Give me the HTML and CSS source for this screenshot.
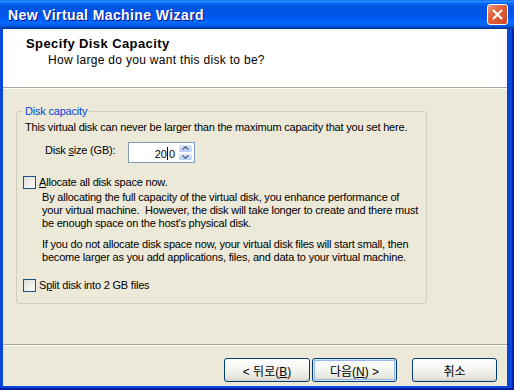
FILE: index.html
```html
<!DOCTYPE html>
<html lang="ko">
<head>
    <meta charset="UTF-8">
    <meta name="viewport" content="width=device-width, initial-scale=1.0">
    <title>New Virtual Machine Wizard</title>
    <link rel="stylesheet" href="styles.css">
</head>
<body>
    <div class="window">
        <div class="titlebar">
            <span class="title">New Virtual Machine Wizard</span>
            <button class="close" aria-label="Close">
                <svg width="13" height="13" viewBox="0 0 13 13"><path d="M2 2 L11 11 M11 2 L2 11" stroke="#fff" stroke-width="2.2" fill="none"/></svg>
            </button>
        </div>

        <div class="frame">
            <div class="client">
                <!-- Page header -->
                <div class="header">
                    <h1>Specify Disk Capacity</h1>
                    <p>How large do you want this disk to be?</p>
                </div>

                <div class="content">
                    <fieldset class="group">
                        <legend>Disk capacity</legend>
                        <p class="intro">This virtual disk can never be larger than the maximum capacity that you set here.</p>

                        <div class="size-row">
                            <label>Disk <u>s</u>ize (GB):</label>
                            <div class="spinner">
                                <div class="spin-value">20<span class="caret"></span>0</div>
                                <div class="spin-buttons">
                                    <span class="spin-btn">
                                        <svg width="7" height="4" viewBox="0 0 7 4"><path d="M0.5 3.5 L3.5 0.8 L6.5 3.5" stroke="#4d6185" stroke-width="1.4" fill="none"/></svg>
                                    </span>
                                    <span class="spin-btn">
                                        <svg width="7" height="4" viewBox="0 0 7 4"><path d="M0.5 0.5 L3.5 3.2 L6.5 0.5" stroke="#4d6185" stroke-width="1.4" fill="none"/></svg>
                                    </span>
                                </div>
                            </div>
                        </div>

                        <div class="check"><span class="box"></span><span><u>A</u>llocate all disk space now.</span></div>
                        <p class="note">By allocating the full capacity of the virtual disk, you enhance performance of<br>your virtual machine.&nbsp; However, the disk will take longer to create and there must<br>be enough space on the host's physical disk.</p>
                        <p class="note second">If you do not allocate disk space now, your virtual disk files will start small, then<br>become larger as you add applications, files, and data to your virtual machine.</p>

                        <div class="check split"><span class="box"></span><span>S<u>p</u>lit disk into 2 GB files</span></div>
                    </fieldset>
                </div>

                <div class="footer">
                    <button class="btn">&lt; 뒤로(<u>B</u>)</button>
                    <button class="btn default">다음(<u>N</u>) &gt;</button>
                    <button class="btn cancel">취소</button>
                </div>
            </div>
        </div>
    </div>
</body>
</html>
```

FILE: styles.css
```css
* {
    box-sizing: border-box;
    margin: 0;
    padding: 0;
}

body {
    width: 514px;
    height: 390px;
    overflow: hidden;
    font-family: 'Liberation Sans', Arial, sans-serif;
    font-size: 11px;
    color: #000;
}

.window {
    display: flex;
    flex-direction: column;
    height: 390px;
}

.titlebar {
    height: 29px;
    display: flex;
    align-items: center;
    justify-content: space-between;
    padding: 0 6px 0 8px;
    background: linear-gradient(to bottom, #0058ee 0%, #3593ff 4%, #288eff 6%, #127dff 8%, #036ffc 10%, #0262ee 14%, #0057e5 20%, #0054e3 24%, #0055eb 56%, #005bf5 66%, #026afe 76%, #0062ef 86%, #0052d6 92%, #0040ab 96%, #003092 100%);
}

.title {
    color: white;
    font-weight: bold;
    font-size: 14px;
    letter-spacing: 0.4px;
    text-shadow: 1px 1px #0f1089;
}

.close {
    width: 21px;
    height: 21px;
    display: flex;
    align-items: center;
    justify-content: center;
    border: 1px solid #fff;
    border-radius: 3px;
    background: linear-gradient(135deg, #f0a080 0%, #e2663f 35%, #cc461c 100%);
}

.frame {
    flex: 1;
    display: flex;
    padding: 0 7px 4px 3px;
    background: #0847d9;
    box-shadow: inset -2px 0 #0024a8, inset 0 -2px #0019a0;
}

.client {
    flex: 1;
    display: flex;
    flex-direction: column;
    background: #ece9d8;
}

.header {
    height: 59px;
    padding: 7px 0 0 23px;
    background: white;
    border-bottom: 1px solid #aca899;
    box-shadow: 0 1px #fff;
}

.header h1 {
    font-size: 13px;
    line-height: 15px;
    letter-spacing: 0.4px;
}

.header p {
    margin: 2px 0 0 22px;
    font-size: 12px;
    line-height: 14px;
    letter-spacing: 0.3px;
}

.content {
    flex: 1;
    padding: 17px 0 0 13px;
    letter-spacing: -0.2px;
    line-height: 13px;
}

.group {
    width: 411px;
    border: 1px solid #d0d0bf;
    border-radius: 3px;
    padding: 0 6px 11px 6px;
    min-inline-size: 0;
}

.group legend {
    padding: 0 2px;
    color: #0046d5;
    line-height: 13px;
}

.intro {
    margin: 3px 0 0 2px;
}

.size-row {
    display: flex;
    margin-top: 8px;
    padding-left: 22px;
}

.size-row label {
    width: 83px;
    margin-top: 2px;
}

.spinner {
    width: 67px;
    height: 21px;
    display: flex;
    padding: 1px;
    border: 1px solid #7f9db9;
    background: white;
}

.spin-value {
    flex: 1;
    text-align: right;
    padding: 3px 3px 0 0;
    letter-spacing: 0;
}

.caret {
    display: inline-block;
    width: 1px;
    height: 13px;
    margin: 0 1px -2px 0;
    background: #000;
    vertical-align: baseline;
}

.spin-buttons {
    width: 15px;
    display: flex;
    flex-direction: column;
}

.spin-btn {
    flex: 1;
    display: flex;
    align-items: center;
    justify-content: center;
    border: 1px solid #fff;
    border-radius: 2px;
    background: linear-gradient(to bottom, #dce6fc, #bccdf6);
}

.check {
    display: flex;
    align-items: center;
    margin-top: 13px;
}

.check.split {
    margin-top: 15px;
}

.box {
    width: 13px;
    height: 13px;
    margin-right: 3px;
    border: 1px solid #1c5180;
    background: linear-gradient(135deg, #dcdcd7, #fff);
}

.note {
    margin: 2px 0 0 19px;
}

.note.second {
    margin-top: 8px;
}

.footer {
    height: 42px;
    display: flex;
    justify-content: flex-end;
    padding: 13px 10px 0 0;
    border-top: 1px solid #aca899;
    box-shadow: inset 0 1px #fff;
}

.btn {
    width: 85px;
    height: 24px;
    border: 1px solid #003c74;
    border-radius: 3px;
    background: linear-gradient(to bottom, #fff 0%, #f4f4f0 50%, #e6e5dd 85%, #d6d0c5 100%);
    font-family: 'Liberation Sans', 'Noto Sans CJK KR', sans-serif;
    font-size: 12px;
    color: #000;
}

.btn:first-child {
    width: 86px;
}

.btn.default {
    margin-left: 2px;
    box-shadow: inset 0 0 0 1px #cee7ff, inset 0 0 0 2px #98b8ea;
}

.btn.cancel {
    margin-left: 15px;
}
```
